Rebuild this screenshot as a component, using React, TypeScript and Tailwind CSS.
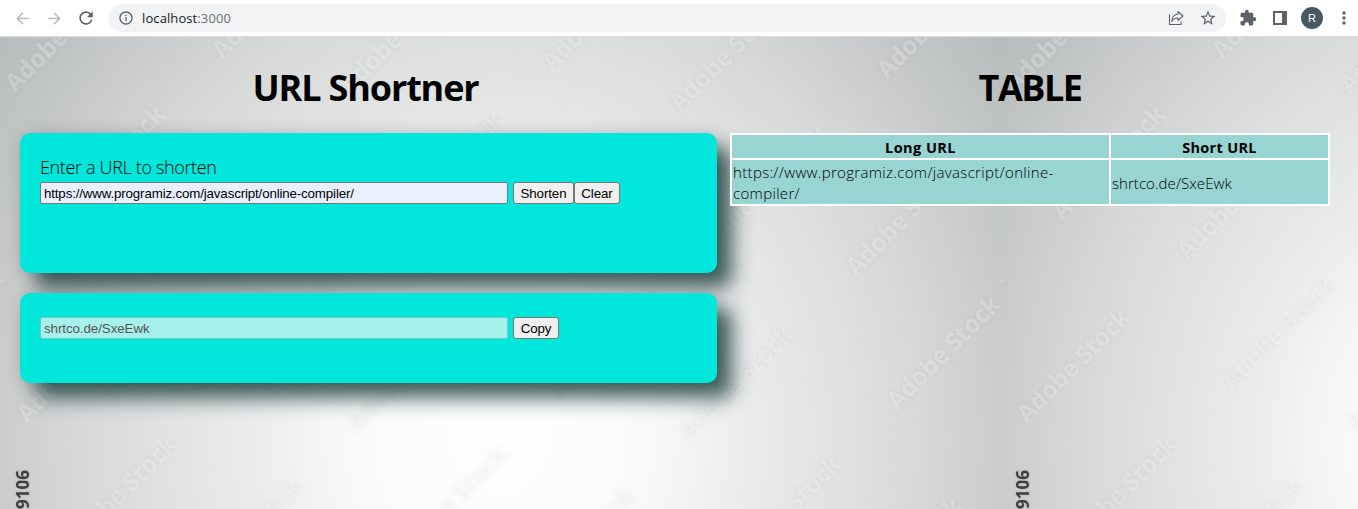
import React from "react";
import { MdArrowBack, MdArrowForward, MdRefresh, MdInfoOutline, MdStarBorder, MdExtension, MdMoreVert } from "react-icons/md";

// Centre of the first letter of each watermark inside one 1000px wide tile.
const marks: [number, number][] = [
  [15, 80], [62, 208], [222, 47], [350, 82], [400, 213], [552, 59], [680, 100],
  [724, 228], [887, 67], [856, 264], [187, 248], [232, 378], [897, 398], [27, 411],
  [357, 421], [74, 538], [198, 581], [738, 558], [859, 600], [690, 428], [405, 548],
  [532, 590], [559, 386], [-99, 372],
];

function Backdrop() {
  return (
    <svg className="absolute inset-0 -z-10" width="1358" height="472" viewBox="0 37 1358 472" aria-hidden="true">
      <defs>
        <radialGradient id="glow" gradientUnits="userSpaceOnUse" cx="0" cy="0" r="1.3" gradientTransform="translate(500 440) scale(500 550)">
          <stop offset="0" stopColor="#fefefe" />
          <stop offset="0.18" stopColor="#fbfbfb" />
          <stop offset="0.25" stopColor="#f7f7f7" />
          <stop offset="0.31" stopColor="#f2f2f2" />
          <stop offset="0.385" stopColor="#ebebec" />
          <stop offset="0.46" stopColor="#e5e6e6" />
          <stop offset="0.57" stopColor="#dddfdf" />
          <stop offset="0.66" stopColor="#d6d8d8" />
          <stop offset="0.77" stopColor="#cacccd" />
          <stop offset="0.95" stopColor="#b7bcbd" />
          <stop offset="1" stopColor="#b2b8b9" />
        </radialGradient>
        <filter id="soft" x="-10%" y="-50%" width="120%" height="200%">
          <feGaussianBlur stdDeviation="2" />
        </filter>
        <pattern id="tile" patternUnits="userSpaceOnUse" x="0" y="0" width="1000" height="700">
          <rect width="1000" height="700" fill="url(#glow)" />
          {marks.map(([x, y]) => (
            <g key={`${x}-${y}`} transform={`translate(${x} ${y}) rotate(-45)`} fontFamily="Open Sans, sans-serif" fontWeight="700" fontSize="24.5">
              <text x="-9" y="9" textLength="148" lengthAdjust="spacingAndGlyphs" fill="#7d8484" fillOpacity="0.12" filter="url(#soft)" aria-hidden="true">
                Adobe Stock
              </text>
              <text x="-9" y="9" textLength="148" lengthAdjust="spacingAndGlyphs" fill="#ffffff" fillOpacity="0.25">
                Adobe Stock
              </text>
            </g>
          ))}
          <text transform="translate(29 509) rotate(-90)" fontFamily="Open Sans, sans-serif" fontWeight="700" fontSize="17" textLength="39" fill="#3c3c3c" stroke="#bfc0c1" strokeOpacity="0.6" strokeWidth="3" paintOrder="stroke">
            9106
          </text>
        </pattern>
      </defs>
      <rect y="37" width="1358" height="472" fill="url(#tile)" />
    </svg>
  );
}

function BrowserBar() {
  return (
    <header className="flex h-[37px] items-center border-b border-[#dcdcdc] bg-white pl-[13px] text-[#5f6368]">
      <MdArrowBack className="size-[19px] shrink-0 text-[#babcbe]" />
      <MdArrowForward className="ml-[13px] size-[19px] shrink-0 text-[#babcbe]" />
      <MdRefresh className="ml-[12px] size-5 shrink-0" />
      <div className="ml-3 flex h-7 w-[1118px] shrink-0 items-center rounded-full bg-[#f1f3f4] pl-[10px] pr-[9px]">
        <MdInfoOutline className="size-4" />
        <span className="ml-2 pt-px font-['Open_Sans',sans-serif] text-[13px] tracking-[0.1px] text-[#202124]">
          localhost<span className="text-[#6b6f73]">:3000</span>
        </span>
        <svg className="ml-auto" width="17" height="16" viewBox="0 0 17 16" fill="none" stroke="currentColor" strokeWidth="1.1">
          <path d="M1.5 4.5v10h11.5v-3" />
          <path d="M10 1.5l5 4.5-5 4.5V8C7 8 5 9 3.800 11.500 4 7.500 6 4.500 10 4z" strokeLinejoin="round" />
        </svg>
        <MdStarBorder className="ml-[14px] size-[18px]" />
      </div>
      <MdExtension className="ml-[13px] size-[18px] shrink-0" />
      <svg className="ml-4 shrink-0" width="14" height="14" viewBox="0 0 14 14">
        <path d="M0 0h14v14H0zM2 2v10h7V2z" fill="currentColor" fillRule="evenodd" />
      </svg>
      <div className="ml-[14px] flex size-[22px] shrink-0 items-center justify-center rounded-full bg-[#455a64] font-['Liberation_Sans',sans-serif] text-[11px] text-white">R</div>
      <MdMoreVert className="ml-[11px] size-5 shrink-0" />
    </header>
  );
}

const cardClass =
  "rounded-[10px] bg-[#03e6db] px-5 shadow-[15px_15px_20px_rgba(20,58,54,0.8),0_0_18px_rgba(0,0,0,0.12)]";
const buttonClass =
  "h-[22px] rounded-[3px] border border-[#767676] bg-[#efefef] pt-px text-center text-[13.333px] leading-[19px] tracking-[-0.1px] text-black font-['Liberation_Sans',Arial,sans-serif]";
const inputClass =
  "mr-[5px] h-[22px] w-[468px] rounded-[2px] border pl-[3px] pt-px text-[13.333px] font-['Liberation_Sans',Arial,sans-serif]";

export default function App() {
  return (
    <div className="h-[509px] w-[1358px] overflow-hidden font-['Open_Sans',sans-serif] text-black">
      <BrowserBar />
      <main className="relative isolate flex h-[472px] pl-5">
        <Backdrop />
        <section className="w-[697px]">
          <h1 className="flex h-24 items-center justify-center pr-[6px] pt-[5px] text-[36px] font-bold leading-none tracking-[-1.15px]"><span>URL Shortner</span></h1>
          <div className={`${cardClass} h-[140px] pt-5`}>
            <p className="h-[29px] text-[18px] font-[350] leading-[28px] tracking-[-0.35px]">Enter a URL to shorten</p>
            <div className="flex">
              <input className={`${inputClass} border-[#767676] bg-[#e8f0fe] tracking-[-0.15px] text-black`} defaultValue="https://www.programiz.com/javascript/online-compiler/" />
              <button className={`${buttonClass} w-[61px]`}>Shorten</button>
              <button className={`${buttonClass} w-[46px]`}>Clear</button>
            </div>
          </div>
          <div className={`${cardClass} mt-5 flex h-[90px] pt-6`}>
            <input disabled className={`${inputClass} border-[#76c9c5] bg-[#a8f0eb] tracking-[-0.07px] text-[#545454]`} defaultValue="shrtco.de/SxeEwk" />
            <button className={`${buttonClass} w-[46px]`}>Copy</button>
          </div>
        </section>
        <section className="ml-[13px] w-[600px]">
          <h1 className="flex h-24 items-center justify-center pt-[5px] text-[36px] font-bold leading-none tracking-[-1.5px]"><span>TABLE</span></h1>
          <table className="w-[598px] table-fixed border-collapse bg-[#97d4d2] text-[15px]">
            <colgroup>
              <col className="w-[379px]" />
              <col className="w-[219px]" />
            </colgroup>
            <thead>
              <tr className="h-[25px]">
                <th className="border-2 border-white p-0 pt-px text-[14.5px] font-bold leading-[21px] tracking-[0.45px]">Long URL</th>
                <th className="border-2 border-white p-0 pt-px text-[14.5px] font-bold leading-[21px] tracking-[0.3px]">Short URL</th>
              </tr>
            </thead>
            <tbody>
              <tr className="h-[46px] font-[350] leading-[21px]">
                <td className="border-2 border-white p-px pt-[2px] pb-0 tracking-[0.33px]">https://www.programiz.com/javascript/online-<br />compiler/</td>
                <td className="border-2 border-white p-px pt-[3px] pb-0 tracking-[0.06px]">shrtco.de/SxeEwk</td>
              </tr>
            </tbody>
          </table>
        </section>
      </main>
    </div>
  );
}
